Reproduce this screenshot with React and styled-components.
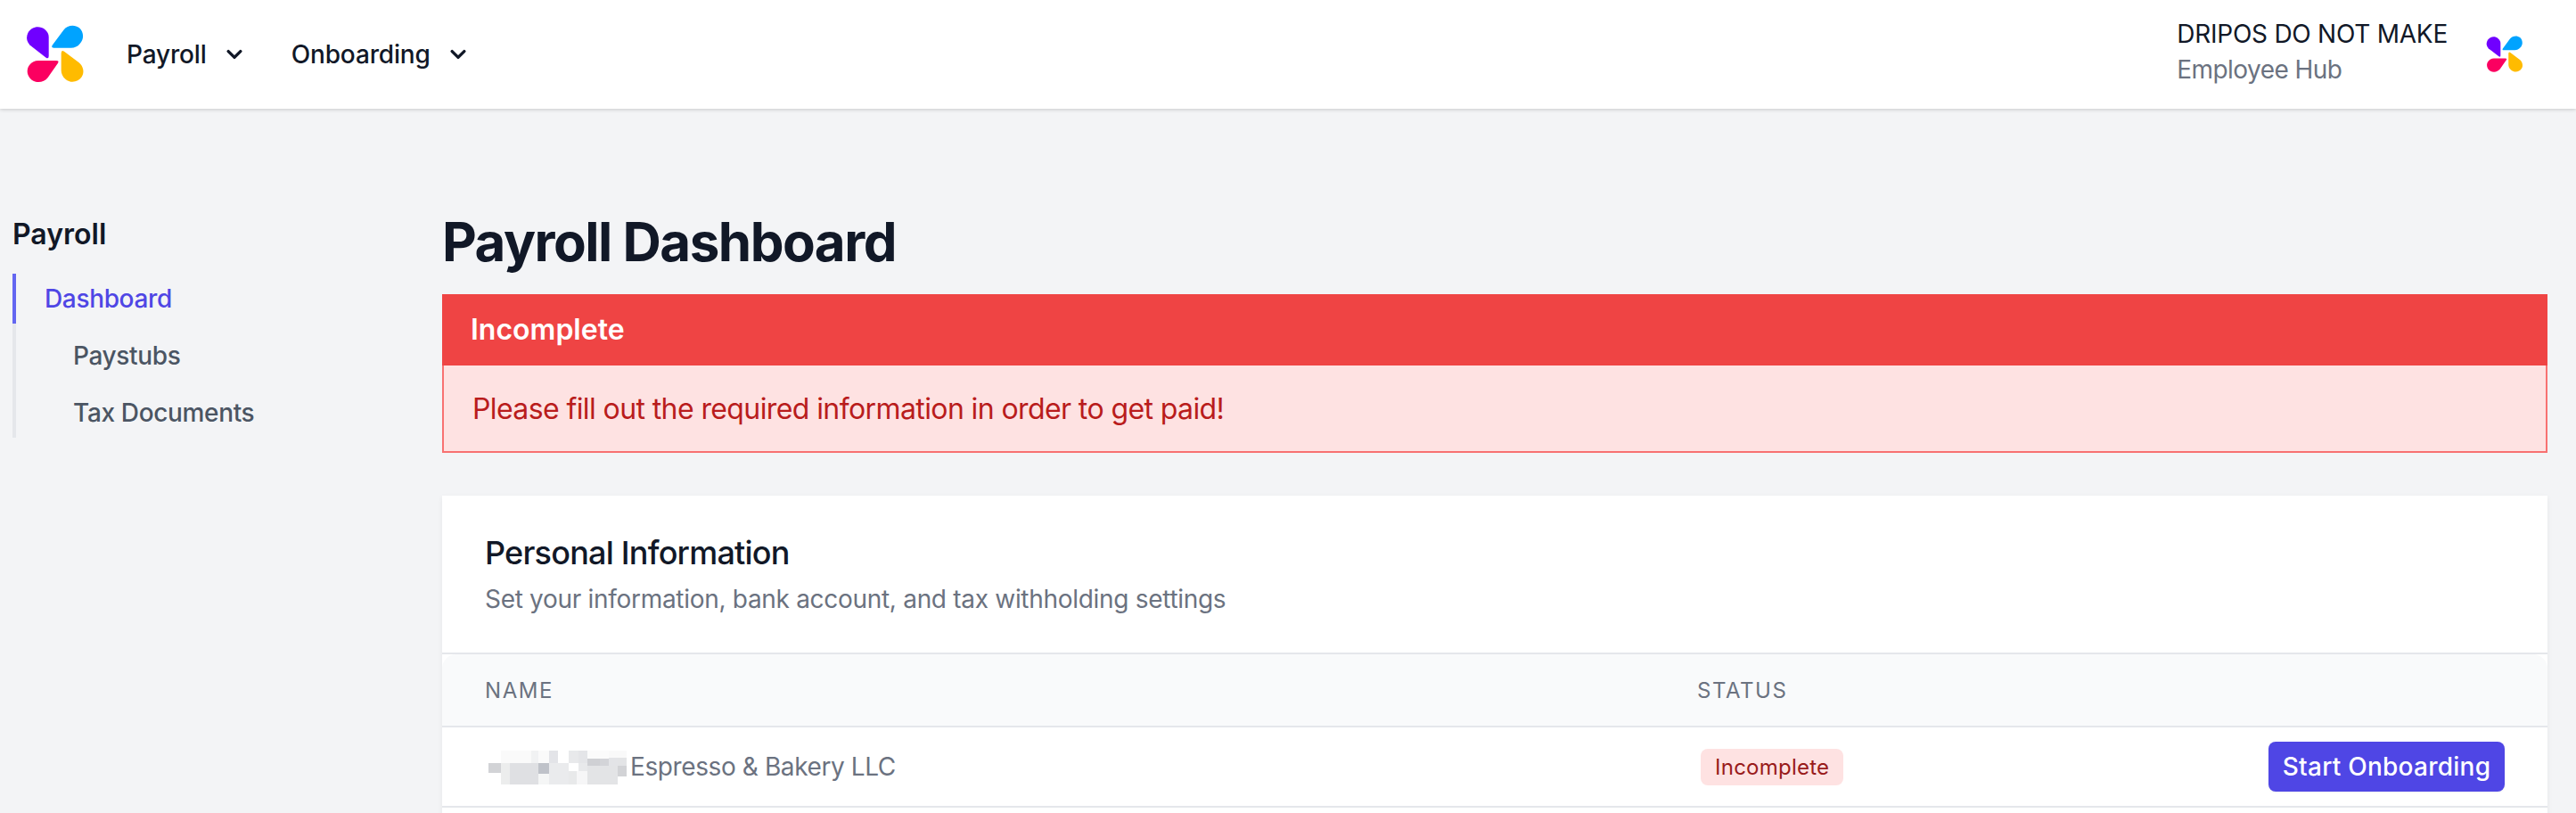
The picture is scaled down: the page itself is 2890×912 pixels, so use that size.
import styled, { createGlobalStyle } from 'styled-components';
import { HiChevronDown } from 'react-icons/hi';

const mosaicCells = [
    [69, 36, 102, 42, '#fafafa'], [171, 36, 24, 42, '#f1f2f3'], [195, 36, 36, 42, '#fafafa'],
    [231, 36, 30, 42, '#e3e4e8'], [297, 36, 33, 42, '#e8e9eb'], [330, 36, 30, 42, '#e4e5e8'],
    [360, 36, 72, 27, '#fbfbfb'], [432, 36, 60, 24, '#f9f9f9'],
    [27, 78, 42, 33, '#d2d3d6'], [69, 78, 30, 72, '#eceded'], [99, 78, 96, 72, '#dfe0e3'],
    [195, 78, 36, 36, '#bfc2c9'], [195, 114, 36, 36, '#f5f6f6'], [231, 78, 66, 72, '#eaebed'],
    [330, 78, 30, 27, '#e8e9eb'], [360, 63, 42, 24, '#cfd0d4'], [402, 63, 30, 24, '#d3d4d8'],
    [432, 60, 30, 27, '#e3e4e7'], [462, 60, 30, 27, '#e3e4e6'], [360, 87, 102, 63, '#e3e4e6'],
    [462, 87, 30, 36, '#d2d3d6'], [297, 105, 27, 45, '#e8e9ea'], [324, 105, 36, 45, '#f6f6f7'],
];

function Logo({ size }) {
    return (
        <LogoMark width={size} height={size} viewBox="58 45 198 198">
            <path fill="#7000ff" d="M135 85 L135 150 Q135 160 126 155 L78 118 C62 105 57 90 65 72 C75 50 105 45 122 60 C131 68 135 75 135 85 Z" />
            <path fill="#00a3ff" d="M152 122 Q142 122 147 113 L185 62 C197 46 222 42 238 55 C254 70 254 93 240 108 C232 118 222 122 210 122 Z" />
            <path fill="#ffbb00" d="M177 140 Q177 128 187 134 L237 172 C252 185 256 205 246 220 C235 238 208 242 192 228 C181 219 177 208 177 198 Z" />
            <path fill="#fb0060" d="M160 165 Q172 165 165 175 L132 222 C120 238 95 242 78 230 C62 218 58 195 70 180 C78 170 88 165 100 165 Z" />
        </LogoMark>
    );
}

export default function App() {
    return (
        <Page>
            <GlobalStyle />
            <TopBar>
                <TopLeft>
                    <Logo size={66} />
                    <TopNav>
                        <TopNavItem>Payroll <HiChevronDown size={34} /></TopNavItem>
                        <TopNavItem>Onboarding <HiChevronDown size={34} /></TopNavItem>
                    </TopNav>
                </TopLeft>
                <TopRight>
                    <Company>
                        <CompanyName>DRIPOS DO NOT MAKE</CompanyName>
                        <CompanySub>Employee Hub</CompanySub>
                    </Company>
                    <Logo size={42} />
                </TopRight>
            </TopBar>
            <Body>
                <Sidebar>
                    <SideTitle>Payroll</SideTitle>
                    <SideList>
                        <SideLink $active>Dashboard</SideLink>
                        <SideLink>Paystubs</SideLink>
                        <SideLink>Tax Documents</SideLink>
                    </SideList>
                </Sidebar>
                <Content>
                    <Title>Payroll Dashboard</Title>
                    <Alert>
                        <AlertHead>Incomplete</AlertHead>
                        <AlertBody>Please fill out the required information in order to get paid!</AlertBody>
                    </Alert>
                    <Card>
                        <CardHead>
                            <CardTitle>Personal Information</CardTitle>
                            <CardSub>Set your information, bank account, and tax withholding settings</CardSub>
                        </CardHead>
                        <TableHeadWrap>
                            <TableHead>
                                <span>Name</span>
                                <span>Status</span>
                            </TableHead>
                        </TableHeadWrap>
                        <TableRow>
                            <NameCell>
                                <svg width="163" height="60" viewBox="15 0 489 180">
                                    {mosaicCells.map(([x, y, w, h, fill]) => (
                                        <rect key={`${x}-${y}`} x={x} y={y} width={w} height={h} fill={fill} />
                                    ))}
                                </svg>
                                Espresso &amp; Bakery LLC
                            </NameCell>
                            <div><Badge>Incomplete</Badge></div>
                            <StartButton>Start Onboarding</StartButton>
                        </TableRow>
                        <EmptyRow />
                    </Card>
                </Content>
            </Body>
        </Page>
    );
}

const GlobalStyle = createGlobalStyle`
    html, body {
        margin: 0;
        padding: 0;
        height: 100%;
        overflow: hidden;
        background-color: #f3f4f6;
    }

    * {
        box-sizing: border-box;
    }
`;

const Page = styled.div`
    height: 912px;
    overflow: hidden;
    font-family: Inter, "Liberation Sans", sans-serif;
    font-size: 28px;
    color: #111827;
    background-color: #f3f4f6;
`;

const LogoMark = styled.svg`
    display: block;
    flex-shrink: 0;
`;

const TopBar = styled.header`
    height: 122px;
    background-color: #fff;
    box-shadow: 0 1px 4px rgba(0, 0, 0, 0.18);
    display: flex;
    align-items: center;
    justify-content: space-between;
    padding: 0 59px 0 29px;
`;

const TopLeft = styled.div`
    display: flex;
    align-items: center;
    gap: 47px;
`;

const TopNav = styled.nav`
    display: flex;
    align-items: center;
    gap: 47px;
    letter-spacing: -0.15px;
`;

const TopNavItem = styled.div`
    display: flex;
    align-items: center;
    gap: 14px;
    font-weight: 500;
    line-height: 40px;
`;

const TopRight = styled.div`
    display: flex;
    align-items: center;
    gap: 43px;
`;

const Company = styled.div`
    display: flex;
    flex-direction: column;
    margin-top: -6px;
    line-height: 40px;
`;

const CompanyName = styled.div`
    font-weight: 400;
    letter-spacing: -0.25px;
`;

const CompanySub = styled.div`
    color: #6b7280;
    letter-spacing: -0.55px;
`;

const Body = styled.main`
    display: flex;
    padding-top: 113px;
`;

const Sidebar = styled.aside`
    width: 496px;
    flex-shrink: 0;
    padding: 8px 0 0 14px;
`;

const SideTitle = styled.h3`
    margin: 0 0 24px;
    font-size: 32px;
    line-height: 40px;
    font-weight: 600;
`;

const SideList = styled.div`
    display: flex;
    flex-direction: column;
    gap: 8px;
    border-left: 4px solid #e5e7eb;
`;

const SideLink = styled.a`
    display: block;
    height: 56px;
    line-height: 56px;
    margin-left: -4px;
    border-left: 4px solid ${(p) => (p.$active ? '#6366f1' : 'transparent')};
    padding-left: ${(p) => (p.$active ? '32px' : '64px')};
    color: ${(p) => (p.$active ? '#4f46e5' : '#4b5563')};
    font-weight: 500;
    letter-spacing: -0.35px;
`;

const Content = styled.div`
    flex: 1;
    min-width: 0;
    padding-right: 32px;
`;

const Title = styled.h1`
    margin: 0 0 23px;
    font-size: 60px;
    line-height: 72px;
    font-weight: 700;
    letter-spacing: -1.5px;
`;

const Alert = styled.section`
    margin-bottom: 48px;
`;

const AlertHead = styled.div`
    height: 80px;
    line-height: 80px;
    padding-left: 32px;
    background-color: #ef4444;
    color: #fff;
    font-size: 32px;
    font-weight: 600;
`;

const AlertBody = styled.div`
    border: 2px solid #f87171;
    border-top: 0;
    padding: 25px 32px 23px;
    background-color: #fee2e2;
    color: #b91c1c;
    font-size: 32px;
    line-height: 48px;
    letter-spacing: -0.6px;
`;

const Card = styled.section`
    background-color: #fff;
    box-shadow: 0 2px 6px rgba(0, 0, 0, 0.06);
`;

const CardHead = styled.div`
    height: 176px;
    padding: 40px 48px 0;
`;

const CardTitle = styled.h3`
    margin: 0 0 8px;
    font-size: 36px;
    line-height: 48px;
    font-weight: 500;
    letter-spacing: -0.78px;
`;

const CardSub = styled.p`
    margin: 0;
    line-height: 40px;
    color: #6b7280;
    letter-spacing: -0.3px;
`;

const TableHeadWrap = styled.div`
    border-top: 2px solid #e5e7eb;
    border-bottom: 2px solid #e5e7eb;
`;

const TableHead = styled.div`
    display: grid;
    grid-template-columns: 1360px 1fr;
    align-items: center;
    height: 80px;
    padding-left: 48px;
    border-radius: 16px 16px 0 0;
    background-color: #f9fafb;
    color: #6b7280;
    font-size: 24px;
    font-weight: 400;
    letter-spacing: 0.065em;
    text-transform: uppercase;
`;

const TableRow = styled.div`
    display: grid;
    grid-template-columns: 1360px 1fr auto;
    align-items: center;
    height: 90px;
    padding: 0 48px;
    border-bottom: 2px solid #e5e7eb;
`;

const NameCell = styled.div`
    display: flex;
    align-items: center;
    color: #6b7280;
    letter-spacing: -0.4px;
`;

const Badge = styled.span`
    display: inline-block;
    margin-left: 4px;
    height: 41px;
    line-height: 41px;
    padding: 0 16px;
    border-radius: 8px;
    background-color: #fee2e2;
    color: #991b1b;
    font-size: 24px;
    font-weight: 400;
    letter-spacing: 0.25px;
`;

const StartButton = styled.button`
    width: 265px;
    height: 56px;
    padding: 0;
    border: 0;
    border-radius: 8px;
    background-color: #4f46e5;
    color: #fff;
    font-family: inherit;
    font-size: 28px;
    font-weight: 500;
    letter-spacing: 0.25px;
    box-shadow: 0 1px 2px rgba(0, 0, 0, 0.05);
    cursor: pointer;
`;

const EmptyRow = styled.div`
    height: 60px;
`;
